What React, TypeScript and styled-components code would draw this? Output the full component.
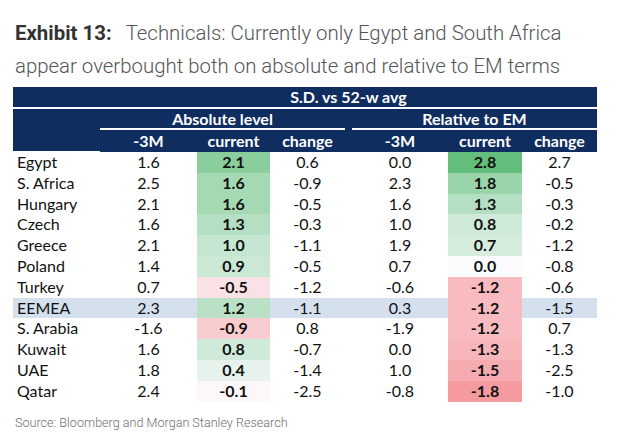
import React from "react";
import styled, { createGlobalStyle } from "styled-components";

const GlobalStyle = createGlobalStyle`
  body {
    margin: 0;
    background: #ffffff;
    font-family: "Roboto", "Liberation Sans", sans-serif;
  }
`;

type Row = {
  name: string;
  abs: [number, number, number];
  rel: [number, number, number];
  highlight?: boolean;
};

const rows: Row[] = [
  { name: "Egypt", abs: [1.6, 2.1, 0.6], rel: [0.0, 2.8, 2.7] },
  { name: "S. Africa", abs: [2.5, 1.6, -0.9], rel: [2.3, 1.8, -0.5] },
  { name: "Hungary", abs: [2.1, 1.6, -0.5], rel: [1.6, 1.3, -0.3] },
  { name: "Czech", abs: [1.6, 1.3, -0.3], rel: [1.0, 0.8, -0.2] },
  { name: "Greece", abs: [2.1, 1.0, -1.1], rel: [1.9, 0.7, -1.2] },
  { name: "Poland", abs: [1.4, 0.9, -0.5], rel: [0.7, 0.0, -0.8] },
  { name: "Turkey", abs: [0.7, -0.5, -1.2], rel: [-0.6, -1.2, -0.6] },
  { name: "EEMEA", abs: [2.3, 1.2, -1.1], rel: [0.3, -1.2, -1.5], highlight: true },
  { name: "S. Arabia", abs: [-1.6, -0.9, 0.8], rel: [-1.9, -1.2, 0.7] },
  { name: "Kuwait", abs: [1.6, 0.8, -0.7], rel: [0.0, -1.3, -1.3] },
  { name: "UAE", abs: [1.8, 0.4, -1.4], rel: [1.0, -1.5, -2.5] },
  { name: "Qatar", abs: [2.4, -0.1, -2.5], rel: [-0.8, -1.8, -1.0] },
];

// colour scale like the spreadsheet: red -> white -> green
const scale = (v: number) => {
  const white = [252, 252, 255];
  const end = v >= 0 ? [99, 190, 123] : [245, 155, 160];
  const t = v >= 0 ? Math.min(v / 2.8, 1) : Math.min(-v / 1.8, 1);
  const c = white.map((w, i) => Math.round(w + (end[i] - w) * t));
  return `rgb(${c[0]}, ${c[1]}, ${c[2]})`;
};

const fmt = (v: number) => v.toFixed(1);

const Page = styled.div`
  padding: 17px 0 0 13px;
  width: 584px;
`;

const Title = styled.div`
  margin-left: 2px;
  font-size: 20.4px;
  line-height: 33px;
  font-weight: 300;
  color: #555555;
  white-space: nowrap;
`;

const Label = styled.span`
  font-weight: 700;
  color: #333333;
  margin-right: 14px;
`;

const Grid = styled.div`
  margin-top: 4px;
  display: grid;
  grid-template-columns: 87px 97px 73px 75px 7px 96px 74px 75px;
  font-family: "Lato", "Liberation Sans", sans-serif;
  font-size: 16px;
  color: #111111;
`;

const Head = styled.div<{ $span?: string; $line?: boolean; $h: number }>`
  background: #0f2d5f;
  color: #ffffff;
  font-weight: 700;
  height: ${(p) => p.$h}px;
  line-height: ${(p) => p.$h}px;
  text-align: center;
  grid-column: ${(p) => p.$span ?? "auto"};
  border-bottom: ${(p) => (p.$line ? "2px solid #ffffff" : "none")};
  box-sizing: content-box;
`;

const Cell = styled.div<{ $bg?: string; $bold?: boolean; $left?: boolean }>`
  height: 20.8px;
  line-height: 20.8px;
  background: ${(p) => p.$bg ?? "transparent"};
  font-weight: ${(p) => (p.$bold ? 700 : 400)};
  text-align: ${(p) => (p.$left ? "left" : "center")};
  padding-left: ${(p) => (p.$left ? "4px" : "0")};
`;

const Source = styled.div`
  margin: 13px 0 0 2px;
  font-size: 12.6px;
  font-weight: 300;
  color: #6f6f6f;
`;

export default function App() {
  return (
    <Page>
      <GlobalStyle />
      <Title>
        <Label>Exhibit 13:</Label>Technicals: Currently only Egypt and South Africa
        <br />
        appear overbought both on absolute and relative to EM terms
      </Title>
      <Grid>
        <Head $h={20} />
        <Head $h={20} $span="2 / 9" $line>
          S.D. vs 52-w avg
        </Head>
        <Head $h={21} />
        <Head $h={19} $span="2 / 5" $line>
          Absolute level
        </Head>
        <Head $h={21} />
        <Head $h={19} $span="6 / 9" $line>
          Relative to EM
        </Head>
        <Head $h={21} />
        <Head $h={22}>-3M</Head>
        <Head $h={22}>current</Head>
        <Head $h={22}>change</Head>
        <Head $h={22} />
        <Head $h={22}>-3M</Head>
        <Head $h={22}>current</Head>
        <Head $h={22}>change</Head>
        {rows.map((r) => {
          const band = r.highlight ? "#d5e0ef" : undefined;
          return (
            <React.Fragment key={r.name}>
              <Cell $left $bg={band}>
                {r.name}
              </Cell>
              <Cell $bg={band}>{fmt(r.abs[0])}</Cell>
              <Cell $bold $bg={scale(r.abs[1])}>
                {fmt(r.abs[1])}
              </Cell>
              <Cell $bg={band}>{fmt(r.abs[2])}</Cell>
              <Cell $bg={band} />
              <Cell $bg={band}>{fmt(r.rel[0])}</Cell>
              <Cell $bold $bg={scale(r.rel[1])}>
                {fmt(r.rel[1])}
              </Cell>
              <Cell $bg={band}>{fmt(r.rel[2])}</Cell>
            </React.Fragment>
          );
        })}
      </Grid>
      <Source>Source: Bloomberg and Morgan Stanley Research</Source>
    </Page>
  );
}
